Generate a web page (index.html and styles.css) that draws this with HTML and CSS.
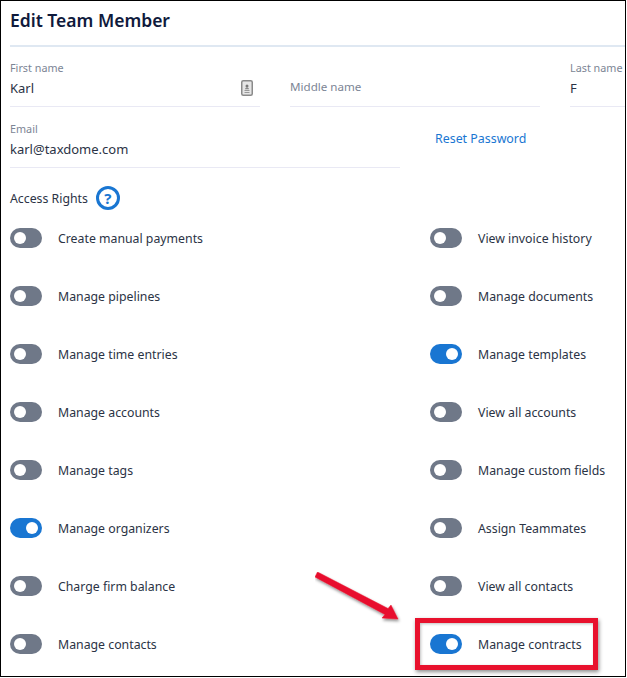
FILE: index.html
```html
<!DOCTYPE html>
<html lang="en">
<head>
<meta charset="utf-8">
<title>Edit Team Member</title>
<link rel="stylesheet" href="styles.css">
</head>
<body>
<main class="frame">
  <h1 class="title">Edit Team Member</h1>
  <div class="row-names">
    <div class="field">
      <label class="label">First name</label>
      <div class="value-line">
        <span class="value">Karl</span>
        <svg class="contact-icon" width="12" height="16" viewBox="0 0 12 16"><rect x="0.75" y="0.75" width="10.5" height="14.5" rx="1.5" fill="#e6e6e6" stroke="#8a8a8a" stroke-width="1.5"/><circle cx="6" cy="6" r="1.5" fill="#777"/><path d="M3.5 10h5v1h-5zM3.5 12h5v1h-5z" fill="#999"/><path d="M4 9.2c0-1 1-1.6 2-1.6s2 .6 2 1.6z" fill="#888"/></svg>
      </div>
    </div>
    <div class="field field-placeholder">
      <span class="placeholder">Middle name</span>
    </div>
    <div class="field field-last">
      <label class="label">Last name</label>
      <div class="value-line"><span class="value">F</span></div>
    </div>
  </div>
  <div class="row-email">
    <div class="field field-email">
      <label class="label">Email</label>
      <div class="value-line"><span class="value">karl@taxdome.com</span></div>
    </div>
    <a class="reset" href="#">Reset Password</a>
  </div>
  <div class="access">
    <span class="access-label">Access Rights</span>
    <span class="help">?</span>
  </div>
  <div class="rights">
    <div class="right"><span class="toggle"></span><span class="right-name">Create manual payments</span></div>
    <div class="right"><span class="toggle"></span><span class="right-name">View invoice history</span></div>
    <div class="right"><span class="toggle"></span><span class="right-name">Manage pipelines</span></div>
    <div class="right"><span class="toggle"></span><span class="right-name">Manage documents</span></div>
    <div class="right"><span class="toggle"></span><span class="right-name">Manage time entries</span></div>
    <div class="right"><span class="toggle on"></span><span class="right-name">Manage templates</span></div>
    <div class="right"><span class="toggle"></span><span class="right-name">Manage accounts</span></div>
    <div class="right"><span class="toggle"></span><span class="right-name">View all accounts</span></div>
    <div class="right"><span class="toggle"></span><span class="right-name">Manage tags</span></div>
    <div class="right"><span class="toggle"></span><span class="right-name">Manage custom fields</span></div>
    <div class="right"><span class="toggle on"></span><span class="right-name">Manage organizers</span></div>
    <div class="right"><span class="toggle"></span><span class="right-name">Assign Teammates</span></div>
    <div class="right"><span class="toggle"></span><span class="right-name">Charge firm balance</span></div>
    <div class="right"><span class="toggle"></span><span class="right-name">View all contacts</span></div>
    <div class="right"><span class="toggle"></span><span class="right-name">Manage contacts</span></div>
    <div class="right"><span class="toggle on"></span><span class="right-name">Manage contracts</span></div>
  </div>
  <div class="callout-box"></div>
  <svg class="callout-arrow" width="90" height="60" viewBox="0 0 90 60">
    <defs><filter id="sh" x="-20%" y="-20%" width="140%" height="140%"><feDropShadow dx="1" dy="2" stdDeviation="1.5" flood-color="#000" flood-opacity="0.45"/></filter></defs>
    <path d="M2.5 0 L73 36.5 L76 33 L83 47 L67 46 L70 42.5 L0 5 Z" fill="#e8112d" stroke="#e8112d" stroke-width="0.5" filter="url(#sh)"/>
  </svg>
</main>
</body>
</html>
```
FILE: styles.css
```css
* { box-sizing: border-box; }
html, body { margin: 0; padding: 0; background: #fff; }
body { width: 627px; height: 678px; overflow: hidden; font-family: "Noto Sans", "Open Sans", sans-serif; color: #2b3345; }
.frame {
  position: relative;
  width: 626px;
  height: 677px;
  border: 1px solid #000;
  padding: 0 0 0 9px;
  overflow: hidden;
  background: #fff;
}
.title {
  margin: 0;
  height: 46px;
  width: 615px;
  padding-top: 6px;
  font-size: 17.5px;
  line-height: 26px;
  font-weight: 600;
  color: #0f1a3c;
  border-bottom: 2px solid #dfe8f2;
}
.row-names { display: flex; gap: 30px; margin-top: 13px; width: 700px; }
.field { width: 250px; height: 47px; border-bottom: 1px solid #e9e9f4; flex: none; }
.field-placeholder { display: flex; align-items: center; padding-top: 7px; }
.field-last { width: 60px; }
.field-email { width: 390px; }
.label { display: block; font-size: 10.8px; line-height: 16px; color: #7c8595; }
.value-line { display: flex; align-items: center; justify-content: space-between; height: 24px; padding-right: 7px; }
.value { font-size: 13px; color: #2b3345; }
.contact-icon { display: block; }
.placeholder { font-size: 11.6px; color: #7c8595; }
.row-email { display: flex; margin-top: 14px; }
.reset { margin-left: 35px; margin-top: 9px; font-size: 12.4px; line-height: 18px; color: #1976d2; text-decoration: none; }
.access { display: flex; align-items: center; gap: 8px; height: 24px; margin-top: 18px; }
.access-label { font-size: 12.3px; color: #2b3345; }
.help {
  width: 24px; height: 24px; border: 3px solid #1976d2; border-radius: 50%;
  display: flex; align-items: center; justify-content: center;
  font-size: 15px; font-weight: 700; color: #1976d2; line-height: 1;
}
.rights {
  display: grid;
  grid-template-columns: 420px 1fr;
  grid-auto-rows: 58px;
}
.right { display: flex; align-items: center; gap: 16px; height: 30px; margin-top: 13px; }
.toggle {
  position: relative; flex: none; width: 32px; height: 20px; border-radius: 10px; background: #6f7888;
}
.toggle::after {
  content: ""; position: absolute; top: 4px; left: 4px; width: 12px; height: 12px; border-radius: 50%; background: #fff;
}
.toggle.on { background: #1976d2; }
.toggle.on::after { left: 16px; }
.right-name { font-size: 12.3px; color: #2b3345; }
.callout-box {
  position: absolute; left: 414px; top: 617px; width: 183px; height: 52px;
  border: 5px solid #e8112d;
  box-shadow: 1px 2px 4px rgba(0,0,0,.45), inset 1px 1px 3px rgba(0,0,0,.25);
}
.callout-arrow { position: absolute; left: 314px; top: 571px; }
```
